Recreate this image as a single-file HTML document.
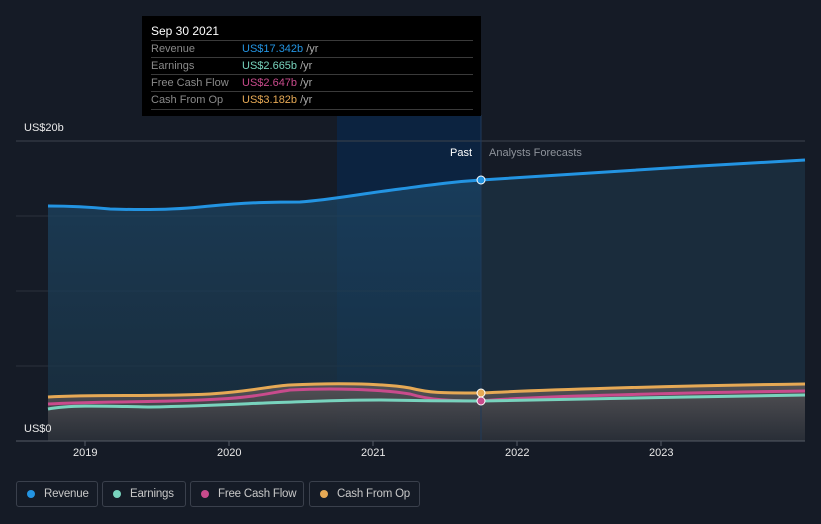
<!DOCTYPE html>
<html><head><meta charset="utf-8"><style>
body{margin:0;width:821px;height:524px;background:#151b26;overflow:hidden;font-family:"Liberation Sans",sans-serif;position:relative}
.tt{position:absolute;left:142px;top:16px;width:339px;height:100px;background:#000}
.tt .h{position:absolute;left:9px;top:8px;color:#fff;font-size:12px}
.row{position:absolute;left:9px;width:322px;border-top:1px solid #3a3a3a;height:17px;font-size:11px;color:#8a8a8a;line-height:16px}
.row b{font-weight:normal;position:absolute;left:91px}
.row span{color:#aaa}
.leg{position:absolute;top:481px;height:26px;border:1px solid #3a404c;border-radius:3px;color:#c8c8c8;font-size:11.5px;line-height:24px;box-sizing:border-box;padding-left:27px;white-space:nowrap;letter-spacing:-0.2px}
.leg i{position:absolute;left:10px;top:8px;width:8px;height:8px;border-radius:50%}
.ax{position:absolute;top:447px;color:#e8e8e8;font-size:11px}
</style></head><body>
<svg width="821" height="524" style="position:absolute;left:0;top:0">
<defs>
<linearGradient id="g1" x1="0" y1="0" x2="0" y2="1"><stop offset="0" stop-color="#1d4666"/><stop offset="1" stop-color="#193040"/></linearGradient>
<linearGradient id="g2" x1="0" y1="0" x2="0" y2="1"><stop offset="0" stop-color="#5a5658"/><stop offset="1" stop-color="#2a2e36"/></linearGradient>
<clipPath id="past"><rect x="0" y="0" width="481" height="524"/></clipPath>
<clipPath id="fut"><rect x="481" y="0" width="340" height="524"/></clipPath>
</defs>
<rect x="337" y="115" width="144" height="326" fill="#0c2340"/>
<line x1="16" y1="141" x2="805" y2="141" stroke="#3d434d"/>
<line x1="16" y1="216" x2="805" y2="216" stroke="#2c323c"/>
<line x1="16" y1="291" x2="805" y2="291" stroke="#2c323c"/>
<line x1="16" y1="366" x2="805" y2="366" stroke="#2c323c"/>
<path clip-path="url(#past)" d="M48,206 C70,206 90,207 110,209 C140,210 170,210 200,207 C240,203 260,202 300,202 C330,200 360,194 400,189 C430,185 450,182 481,180 C520,178 600,173 700,166 L805,160 L805,441 L48,441Z" fill="url(#g1)" opacity="0.75"/>
<path clip-path="url(#fut)" d="M48,206 C70,206 90,207 110,209 C140,210 170,210 200,207 C240,203 260,202 300,202 C330,200 360,194 400,189 C430,185 450,182 481,180 C520,178 600,173 700,166 L805,160 L805,441 L48,441Z" fill="#1a2c3c"/>
<path d="M48,397 C100,394 150,397 210,394 C255,391 270,386 290,385 C330,383 380,383 410,388 C430,393 440,393 481,393 C540,390 660,386 805,384 L805,441 L48,441Z" fill="url(#g2)" opacity="0.9"/>
<path d="M48,206 C70,206 90,207 110,209 C140,210 170,210 200,207 C240,203 260,202 300,202 C330,200 360,194 400,189 C430,185 450,182 481,180 C520,178 600,173 700,166 L805,160" fill="none" stroke="#2394e2" stroke-width="3"/>
<path d="M48,397 C100,394 150,397 210,394 C255,391 270,386 290,385 C330,383 380,383 410,388 C430,393 440,393 481,393 C540,390 660,386 805,384" fill="none" stroke="#e6a955" stroke-width="3"/>
<path d="M48,404 C100,401 150,403 220,399 C255,397 270,393 290,390 C330,388 380,389 410,394 C430,400 450,401 481,401 C520,397 660,393 805,391" fill="none" stroke="#c84b8c" stroke-width="3"/>
<path d="M48,409 C70,405 100,406 150,407 C200,406 240,404 265,403 C300,402 330,400 380,400 C430,401 460,401 481,401 C540,399 700,397 805,395" fill="none" stroke="#78d3bd" stroke-width="3"/>
<line x1="481" y1="115" x2="481" y2="441" stroke="#1f3a5a"/>
<line x1="16" y1="441" x2="805" y2="441" stroke="#555b66"/>
<g stroke="#555b66"><line x1="85" y1="441" x2="85" y2="446"/><line x1="229" y1="441" x2="229" y2="446"/><line x1="373" y1="441" x2="373" y2="446"/><line x1="517" y1="441" x2="517" y2="446"/><line x1="661" y1="441" x2="661" y2="446"/></g>
<circle cx="481" cy="180" r="4" fill="#2394e2" stroke="#fff" stroke-width="1"/>
<circle cx="481" cy="393" r="4" fill="#e6a955" stroke="#fff" stroke-width="1"/>
<circle cx="481" cy="401" r="4" fill="#c84b8c" stroke="#fff" stroke-width="1"/>
</svg>
<div style="position:absolute;left:24px;top:122px;color:#e8e8e8;font-size:11px">US$20b</div>
<div style="position:absolute;left:24px;top:423px;color:#e8e8e8;font-size:11px">US$0</div>
<div style="position:absolute;left:450px;top:147px;color:#fff;font-size:11px">Past</div>
<div style="position:absolute;left:489px;top:147px;color:#8e939b;font-size:11px">Analysts Forecasts</div>
<div class="ax" style="left:73px">2019</div><div class="ax" style="left:217px">2020</div><div class="ax" style="left:361px">2021</div><div class="ax" style="left:505px">2022</div><div class="ax" style="left:649px">2023</div>
<div class="tt"><div class="h">Sep 30 2021</div>
<div class="row" style="top:24px">Revenue<b><font color="#2394e2">US$17.342b</font> <span>/yr</span></b></div>
<div class="row" style="top:41px">Earnings<b><font color="#78d3bd">US$2.665b</font> <span>/yr</span></b></div>
<div class="row" style="top:58px">Free Cash Flow<b><font color="#c84b8c">US$2.647b</font> <span>/yr</span></b></div>
<div class="row" style="top:75px;height:17px;border-bottom:1px solid #3a3a3a">Cash From Op<b><font color="#e6a955">US$3.182b</font> <span>/yr</span></b></div>
</div>
<div class="leg" style="left:16px;width:82px"><i style="background:#2394e2"></i>Revenue</div>
<div class="leg" style="left:102px;width:84px"><i style="background:#78d3bd"></i>Earnings</div>
<div class="leg" style="left:190px;width:114px"><i style="background:#c84b8c"></i>Free Cash Flow</div>
<div class="leg" style="left:309px;width:111px"><i style="background:#e6a955"></i>Cash From Op</div>
</body></html>
